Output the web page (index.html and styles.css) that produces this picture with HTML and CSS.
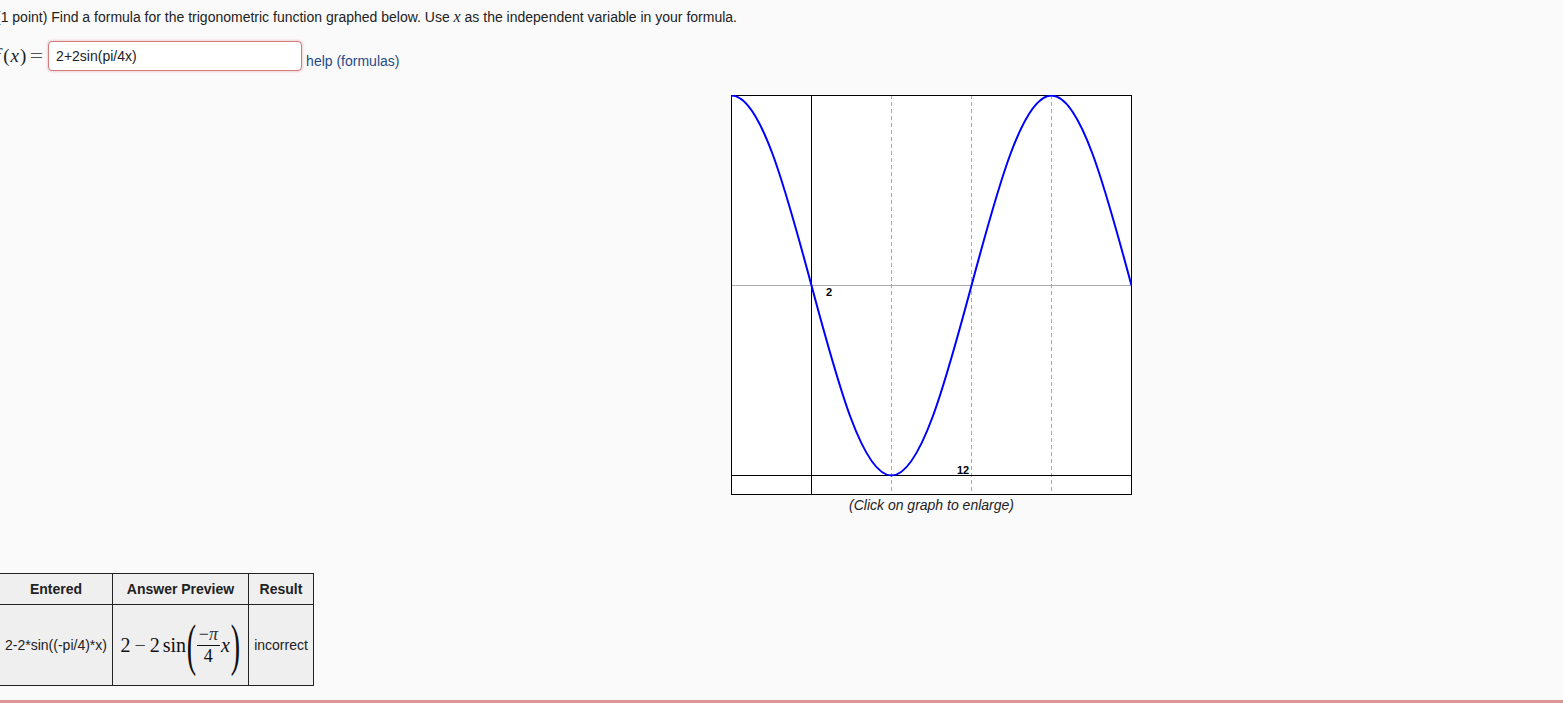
FILE: index.html
```html
<!DOCTYPE html>
<html>
<head>
<meta charset="utf-8">
<link rel="stylesheet" href="styles.css">
</head>
<body>
<div class="page">
  <div class="problem">
    <p class="q">(1 point) Find a formula for the trigonometric function graphed below. Use <span class="mvar">x</span> as the independent variable in your formula.</p>
    <div class="answer-row">
      <span class="mathlbl"><span class="mi mf">f</span>(<span class="mi">x</span>)<span class="eq">=</span></span>
      <input class="ans" type="text" value="2+2sin(pi/4x)">
      <span class="help">help (formulas)</span>
    </div>
    <div class="graph-wrap">
      <figure class="graph">
        <svg width="401" height="400" viewBox="0 0 401 400">
          <rect x="0" y="0" width="401" height="400" fill="#fff"/>
          <g stroke="#aaa" stroke-width="1" stroke-dasharray="4 3">
            <line x1="160.5" y1="0" x2="160.5" y2="400"/>
            <line x1="240.5" y1="0" x2="240.5" y2="400"/>
            <line x1="320.5" y1="0" x2="320.5" y2="400"/>
          </g>
          <line x1="0" y1="190.5" x2="401" y2="190.5" stroke="#aaa" stroke-width="1"/>
          <line x1="0" y1="380.5" x2="401" y2="380.5" stroke="#000" stroke-width="1"/>
          <line x1="80.5" y1="0" x2="80.5" y2="400" stroke="#000" stroke-width="1"/>
          <rect x="0.5" y="0.5" width="400" height="399" fill="none" stroke="#000" stroke-width="1"/>
          <path d="M0.5,0.5 C29.45,0.5 54.41,93.16 80.5,190.5 C106.59,287.84 131.55,380.5 160.5,380.5 C189.45,380.5 214.41,287.84 240.5,190.5 C266.59,93.16 291.55,0.5 320.5,0.5 C349.45,0.5 374.41,93.16 400.5,190.5" fill="none" stroke="#0000ff" stroke-width="2"/>
          <text x="95" y="201" class="glbl">2</text>
          <text x="226" y="379" class="glbl">12</text>
        </svg>
        <figcaption>(Click on graph to enlarge)</figcaption>
      </figure>
    </div>
  </div>
  <table class="results">
    <tr>
      <th class="c1">Entered</th>
      <th class="c2">Answer Preview</th>
      <th class="c3">Result</th>
    </tr>
    <tr>
      <td class="c1">2-2*sin((-pi/4)*x)</td>
      <td class="c2">
        <span class="mrow"><span>2</span><span class="mo">−</span><span>2</span><span class="fn">sin</span><span class="bigp">(</span><span class="frac"><span class="num">−<span class="mi">π</span></span><span class="den">4</span></span><span class="mi mx">x</span><span class="bigp">)</span></span>
      </td>
      <td class="c3">incorrect</td>
    </tr>
  </table>
</div>
<div class="bottom-bar"></div>
</body>
</html>
```
FILE: styles.css
```css
html, body {
  margin: 0;
  padding: 0;
}
body {
  background: #fafafa;
  font-family: "Liberation Sans", Arial, sans-serif;
  font-size: 14px;
  color: #222;
  overflow: hidden;
}
.page {
  margin-left: -4px;
}
.q {
  margin: 0;
  padding-top: 7px;
  line-height: 20px;
  white-space: nowrap;
}
.mvar, .mi {
  font-family: "Liberation Serif", "Times New Roman", serif;
  font-style: italic;
}
.mvar {
  font-size: 16px;
}
.answer-row {
  display: flex;
  align-items: center;
  margin-top: 14px;
  height: 30px;
}
.mathlbl {
  font-family: "Liberation Serif", "Times New Roman", serif;
  font-size: 19px;
  color: #222;
  white-space: nowrap;
  margin-left: -2px;
}
.mathlbl .mf {
  margin-right: 2px;
}
.mathlbl .mi {
  padding: 0 1px;
}
.mathlbl .eq {
  display: inline-block;
  margin-left: 5px;
  color: #555;
  transform: scaleX(1.25);
}
.ans {
  box-sizing: border-box;
  width: 254px;
  height: 30px;
  margin: 0 0 0 6px;
  padding: 0 7px;
  border: 1px solid #d37b7b;
  border-radius: 4px;
  box-shadow: 0 0 3px rgba(205, 90, 90, 0.45);
  background: #fff;
  font-family: "Liberation Sans", Arial, sans-serif;
  font-size: 14px;
  color: #222;
  outline: none;
}
.help {
  align-self: flex-end;
  margin-left: 4px;
  line-height: 16px;
  margin-bottom: 2px;
  color: #1f4a86;
}
.graph-wrap {
  padding-left: 735px;
  margin-top: 24px;
}
.graph {
  margin: 0;
  width: 401px;
}
.graph svg {
  display: block;
}
.glbl {
  font-family: "Liberation Sans", Arial, sans-serif;
  font-size: 11px;
  font-weight: bold;
  fill: #000;
}
.graph figcaption {
  text-align: center;
  font-style: italic;
  line-height: 20px;
  margin-top: 0;
  color: #222;
}
.results {
  border-collapse: collapse;
  margin: 58px 0 0 3px;
  background: #efefef;
}
.results th, .results td {
  border: 1px solid #222;
  padding: 0 4px;
  text-align: center;
  white-space: nowrap;
}
.results th {
  height: 30px;
  font-weight: bold;
}
.results td {
  height: 80px;
}
.results .c1 { width: 104px; }
.results .c2 { width: 127px; }
.results .c3 { width: 56px; }
.mrow {
  display: inline-flex;
  align-items: center;
  font-family: "Liberation Serif", "Times New Roman", serif;
  font-size: 20px;
  color: #111;
}
.mo {
  margin: 0 4px;
  color: #444;
}
.fn {
  margin-left: 3px;
}
.bigp {
  display: inline-block;
  font-size: 56px;
  line-height: 52px;
  transform: scaleX(0.5);
  margin: 0 -4px;
  font-weight: normal;
}
.frac {
  display: inline-flex;
  flex-direction: column;
  align-items: center;
  font-size: 18px;
  line-height: 19px;
}
.frac .num {
  padding: 0 2px 1px;
  border-bottom: 1px solid #111;
  color: #333;
}
.frac .den {
  padding-top: 1px;
}
.mx {
  margin-left: 1px;
}
.bottom-bar {
  height: 3px;
  margin-top: 14px;
  background: #dc9694;
}
```
